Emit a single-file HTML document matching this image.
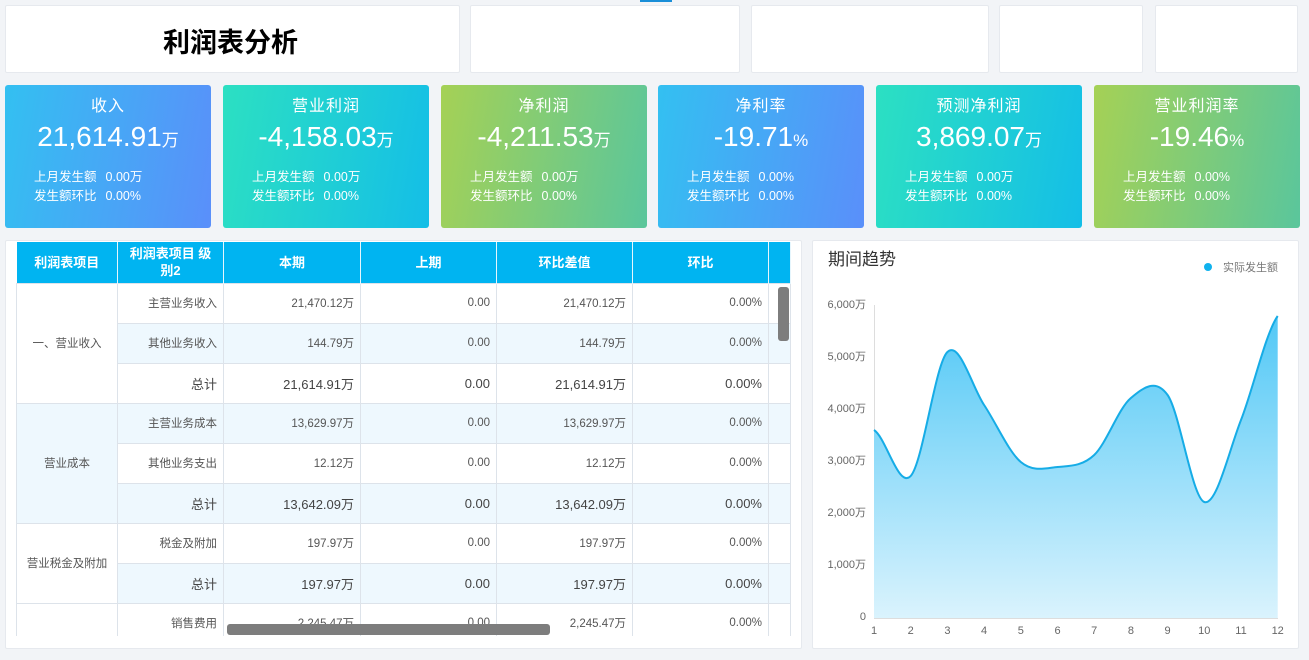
<!DOCTYPE html>
<html><head><meta charset="utf-8"><style>
*{margin:0;padding:0;box-sizing:border-box}
body{width:1309px;height:660px;background:#f2f4f7;font-family:"Liberation Sans","Noto Sans CJK SC",sans-serif;position:relative;overflow:hidden}
.b{position:absolute;background:#fff;border:1px solid #e6e9ee;border-radius:2px}
.k{position:absolute;top:85px;width:206px;height:143px;border-radius:3px;color:#fff}
.k .t{position:absolute;top:91px;}
.k h3{position:absolute;top:7px;width:100%;text-align:center;font-size:16px;font-weight:normal;letter-spacing:1px}
.k .v{position:absolute;top:36px;width:100%;text-align:center;font-size:28px}
.k .v small{font-size:17px}
.k .s{position:absolute;left:29px;top:83px;font-size:12.5px;line-height:19px}
.k .s span{margin-left:9px}
.c1{background:linear-gradient(100deg,#33c0f1,#5a8ffa)}
.c2{background:linear-gradient(100deg,#2ce0c2,#14bee7)}
.c3{background:linear-gradient(100deg,#a5d155,#5ac69c)}
table{position:absolute;left:16px;top:242px;border-collapse:collapse;font-size:11.5px;color:#555;table-layout:fixed}
th{background:#00b4f1;color:#fff;height:41px;font-size:13px;border-right:1px solid #e6f6fd;line-height:17px}
td{height:40px;border:1px solid #dde3ea;text-align:right;padding-right:6px}
td.g{text-align:center;padding:0}
tr.l td.x{background:#eef8fe}
.tot{font-size:13px;color:#444}
</style></head><body>
<div style="position:absolute;left:640px;top:0;width:32px;height:2px;background:#1a8fd8"></div>
<div class="b" style="left:5px;top:5px;width:455px;height:68px"><div style="position:absolute;left:157px;top:15px;font-size:27px;color:#000;font-weight:bold">利润表分析</div></div>
<div class="b" style="left:470px;top:5px;width:270px;height:68px"></div>
<div class="b" style="left:751px;top:5px;width:238px;height:68px"></div>
<div class="b" style="left:999px;top:5px;width:144px;height:68px"></div>
<div class="b" style="left:1155px;top:5px;width:143px;height:68px"></div>

<div class="k c1" style="left:5px"><h3>收入</h3><div class="v">21,614.91<small>万</small></div><div class="s">上月发生额<span>0.00万</span><br>发生额环比<span>0.00%</span></div></div>
<div class="k c2" style="left:223px"><h3>营业利润</h3><div class="v">-4,158.03<small>万</small></div><div class="s">上月发生额<span>0.00万</span><br>发生额环比<span>0.00%</span></div></div>
<div class="k c3" style="left:441px"><h3>净利润</h3><div class="v">-4,211.53<small>万</small></div><div class="s">上月发生额<span>0.00万</span><br>发生额环比<span>0.00%</span></div></div>
<div class="k c1" style="left:658px"><h3>净利率</h3><div class="v">-19.71<small>%</small></div><div class="s">上月发生额<span>0.00%</span><br>发生额环比<span>0.00%</span></div></div>
<div class="k c2" style="left:876px"><h3>预测净利润</h3><div class="v">3,869.07<small>万</small></div><div class="s">上月发生额<span>0.00万</span><br>发生额环比<span>0.00%</span></div></div>
<div class="k c3" style="left:1094px"><h3>营业利润率</h3><div class="v">-19.46<small>%</small></div><div class="s">上月发生额<span>0.00%</span><br>发生额环比<span>0.00%</span></div></div>

<div class="b" style="left:5px;top:240px;width:797px;height:409px;overflow:hidden">
</div>
<div style="position:absolute;left:16px;top:242px;width:775px;height:394px;overflow:hidden">
<table style="left:0;top:0">
<colgroup><col width="101"><col width="106"><col width="137"><col width="136"><col width="136"><col width="136"><col width="22"></colgroup>
<tr><th>利润表项目</th><th>利润表项目 级<br>别2</th><th>本期</th><th>上期</th><th>环比差值</th><th>环比</th><th></th></tr>
<tr><td class="g" rowspan="3">一、营业收入</td><td>主营业务收入</td><td>21,470.12万</td><td>0.00</td><td>21,470.12万</td><td>0.00%</td><td></td></tr>
<tr class="l"><td class="x">其他业务收入</td><td class="x">144.79万</td><td class="x">0.00</td><td class="x">144.79万</td><td class="x">0.00%</td><td class="x"></td></tr>
<tr class="tot"><td>总计</td><td>21,614.91万</td><td>0.00</td><td>21,614.91万</td><td>0.00%</td><td></td></tr>
<tr class="l"><td class="g x" rowspan="3">营业成本</td><td class="x">主营业务成本</td><td class="x">13,629.97万</td><td class="x">0.00</td><td class="x">13,629.97万</td><td class="x">0.00%</td><td class="x"></td></tr>
<tr><td>其他业务支出</td><td>12.12万</td><td>0.00</td><td>12.12万</td><td>0.00%</td><td></td></tr>
<tr class="l tot"><td class="x">总计</td><td class="x">13,642.09万</td><td class="x">0.00</td><td class="x">13,642.09万</td><td class="x">0.00%</td><td class="x"></td></tr>
<tr><td class="g" rowspan="2">营业税金及附加</td><td>税金及附加</td><td>197.97万</td><td>0.00</td><td>197.97万</td><td>0.00%</td><td></td></tr>
<tr class="l tot"><td class="x">总计</td><td class="x">197.97万</td><td class="x">0.00</td><td class="x">197.97万</td><td class="x">0.00%</td><td class="x"></td></tr>
<tr><td class="g"></td><td>销售费用</td><td>2,245.47万</td><td>0.00</td><td>2,245.47万</td><td>0.00%</td><td></td></tr>
</table>
</div>
<div style="position:absolute;left:778px;top:287px;width:11px;height:54px;background:#7d7d7d;border-radius:3px"></div>
<div style="position:absolute;left:227px;top:624px;width:323px;height:11px;background:#7d7d7d;border-radius:3px"></div>

<div class="b" style="left:812px;top:240px;width:487px;height:409px"></div>
<svg style="position:absolute;left:0;top:0" width="1309" height="660">
<defs><linearGradient id="gr" x1="0" y1="0" x2="0" y2="1"><stop offset="0" stop-color="#52c8f6"/><stop offset="1" stop-color="#daf3fd"/></linearGradient></defs>
<text x="828" y="265" font-size="17" fill="#333" font-family="Liberation Sans,Noto Sans CJK SC,sans-serif">期间趋势</text>
<circle cx="1208" cy="267" r="4" fill="#10b2ee"/>
<text x="1223" y="271" font-size="11" fill="#777" font-family="Liberation Sans,Noto Sans CJK SC,sans-serif">实际发生额</text>
<g font-size="11" fill="#666" text-anchor="end" font-family="Liberation Sans,Noto Sans CJK SC,sans-serif">
<text x="866" y="308">6,000万</text><text x="866" y="360">5,000万</text><text x="866" y="412">4,000万</text><text x="866" y="464">3,000万</text><text x="866" y="516">2,000万</text><text x="866" y="568">1,000万</text><text x="866" y="620">0</text></g>
<g font-size="11" fill="#666" text-anchor="middle" font-family="Liberation Sans,sans-serif">
<text x="874" y="634">1</text><text x="910.7" y="634">2</text><text x="947.4" y="634">3</text><text x="984.1" y="634">4</text><text x="1020.8" y="634">5</text><text x="1057.5" y="634">6</text><text x="1094.2" y="634">7</text><text x="1130.9" y="634">8</text><text x="1167.6" y="634">9</text><text x="1204.3" y="634">10</text><text x="1241" y="634">11</text><text x="1277.7" y="634">12</text></g>
<line x1="874.5" y1="305" x2="874.5" y2="618" stroke="#ddd"/>
<line x1="874" y1="618.5" x2="1278" y2="618.5" stroke="#ddd"/>
<path d="M874 430C886.2 437.7 898.5 489 910.7 476C922.9 463 935.2 363.8 947.4 352C959.6 340.2 971.9 386.7 984.1 405C996.3 423.3 1008.6 451.7 1020.8 462C1033 472.3 1045.3 468.2 1057.5 467C1069.7 465.8 1082 466.5 1094.2 455C1106.4 443.5 1118.7 408 1130.9 398C1143.1 388 1155.4 377.7 1167.6 395C1179.8 412.3 1192.1 497.8 1204.3 502C1216.5 506.2 1228.8 451 1241 420C1253.2 389 1265.5 333.3 1277.7 316L1277.7 618L874 618Z" fill="url(#gr)"/>
<path d="M874 430C886.2 437.7 898.5 489 910.7 476C922.9 463 935.2 363.8 947.4 352C959.6 340.2 971.9 386.7 984.1 405C996.3 423.3 1008.6 451.7 1020.8 462C1033 472.3 1045.3 468.2 1057.5 467C1069.7 465.8 1082 466.5 1094.2 455C1106.4 443.5 1118.7 408 1130.9 398C1143.1 388 1155.4 377.7 1167.6 395C1179.8 412.3 1192.1 497.8 1204.3 502C1216.5 506.2 1228.8 451 1241 420C1253.2 389 1265.5 333.3 1277.7 316" fill="none" stroke="#16ace6" stroke-width="2"/>
</svg>
</body></html>
